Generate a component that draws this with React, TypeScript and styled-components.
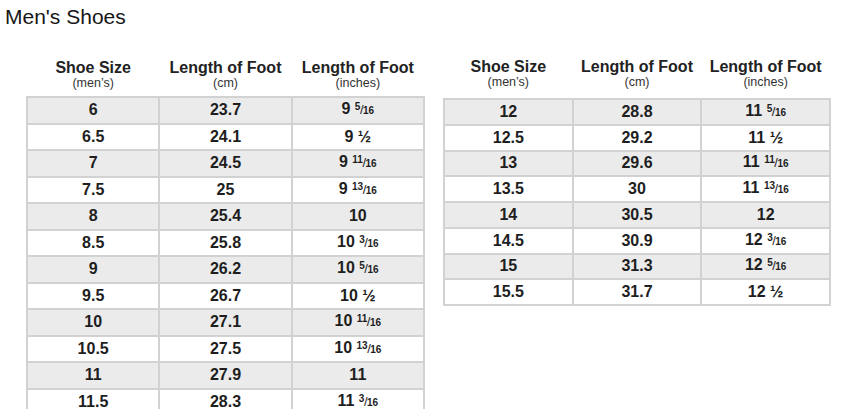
import React from "react";
import styled, { createGlobalStyle } from "styled-components";

const GlobalStyle = createGlobalStyle`
  body {
    margin: 0;
    background: #ffffff;
    font-family: "Liberation Sans", Arial, sans-serif;
    color: #1c1c1c;
  }
`;

const Page = styled.div`
  width: 850px;
  height: 409px;
  overflow: hidden;
  background: #fff;
`;

const Title = styled.h1`
  margin: 0;
  padding: 5px 0 0 5px;
  font-size: 21px;
  font-weight: 400;
  line-height: 24px;
  color: #161616;
`;

const Tables = styled.div`
  display: flex;
  align-items: flex-start;
  gap: 18px;
  padding: 30px 0 0 26px;
`;

const Table = styled.table<{ $width: number; $row: number }>`
  border-collapse: collapse;
  table-layout: fixed;
  width: ${(p) => p.$width}px;

  tbody td {
    height: ${(p) => p.$row - 2}px;
  }
`;

const HeadCell = styled.th<{ $pad: number }>`
  padding: 0 0 ${(p) => p.$pad}px;
  text-align: center;
  vertical-align: bottom;
  font-weight: 700;
  font-size: 16px;
  line-height: 17px;
  color: #222;
  white-space: nowrap;
`;

const Unit = styled.span`
  display: block;
  font-weight: 400;
  font-size: 12.5px;
  line-height: 14px;
  color: #333;
`;

const Row = styled.tr<{ $shade: boolean }>`
  background: ${(p) => (p.$shade ? "#ebebeb" : "#ffffff")};
`;

const Cell = styled.td`
  border: 2px solid #d2d2d2;
  padding: 0;
  text-align: center;
  vertical-align: middle;
  font-weight: 700;
  font-size: 16px;
  line-height: 18px;
  color: #1e1e1e;
`;

const Frac = styled.span`
  display: inline-flex;
  align-items: baseline;
  font-size: 10px;
  font-weight: 700;
`;

const Num = styled.span`
  position: relative;
  top: -4px;
`;

const Slash = styled.span`
  font-size: 13px;
  font-weight: 400;
  margin: 0 -0.5px;
`;

function Inches({ value }: { value: string }) {
  const [whole, frac] = value.split(" ");
  if (!frac) return <>{whole}</>;
  if (frac === "1/2") return <>{whole} ½</>;
  const [n, d] = frac.split("/");
  return (
    <>
      {whole}{" "}
      <Frac>
        <Num>{n}</Num>
        <Slash>/</Slash>
        <span>{d}</span>
      </Frac>
    </>
  );
}

type Size = [string, string, string];

const leftSizes: Size[] = [
  ["6", "23.7", "9 5/16"],
  ["6.5", "24.1", "9 1/2"],
  ["7", "24.5", "9 11/16"],
  ["7.5", "25", "9 13/16"],
  ["8", "25.4", "10"],
  ["8.5", "25.8", "10 3/16"],
  ["9", "26.2", "10 5/16"],
  ["9.5", "26.7", "10 1/2"],
  ["10", "27.1", "10 11/16"],
  ["10.5", "27.5", "10 13/16"],
  ["11", "27.9", "11"],
  ["11.5", "28.3", "11 3/16"],
];

const rightSizes: Size[] = [
  ["12", "28.8", "11 5/16"],
  ["12.5", "29.2", "11 1/2"],
  ["13", "29.6", "11 11/16"],
  ["13.5", "30", "11 13/16"],
  ["14", "30.5", "12"],
  ["14.5", "30.9", "12 3/16"],
  ["15", "31.3", "12 5/16"],
  ["15.5", "31.7", "12 1/2"],
];

function SizeTable({
  rows,
  width,
  row,
  pad,
  lift,
}: {
  rows: Size[];
  width: number;
  row: number;
  pad: number;
  lift: number;
}) {
  return (
    <Table $width={width} $row={row} style={{ marginTop: -lift }}>
      <thead>
        <tr>
          <HeadCell $pad={pad}>
            Shoe Size<Unit>(men’s)</Unit>
          </HeadCell>
          <HeadCell $pad={pad}>
            Length of Foot<Unit>(cm)</Unit>
          </HeadCell>
          <HeadCell $pad={pad}>
            Length of Foot<Unit>(inches)</Unit>
          </HeadCell>
        </tr>
      </thead>
      <tbody>
        {rows.map(([size, cm, inch], i) => (
          <Row key={size} $shade={i % 2 === 0}>
            <Cell>{size}</Cell>
            <Cell>{cm}</Cell>
            <Cell>
              <Inches value={inch} />
            </Cell>
          </Row>
        ))}
      </tbody>
    </Table>
  );
}

export default function App() {
  return (
    <Page>
      <GlobalStyle />
      <Title>Men's Shoes</Title>
      <Tables>
        <SizeTable rows={leftSizes} width={399} row={26.5} pad={6} lift={0} />
        <SizeTable rows={rightSizes} width={388} row={25.75} pad={9} lift={1} />
      </Tables>
    </Page>
  );
}
